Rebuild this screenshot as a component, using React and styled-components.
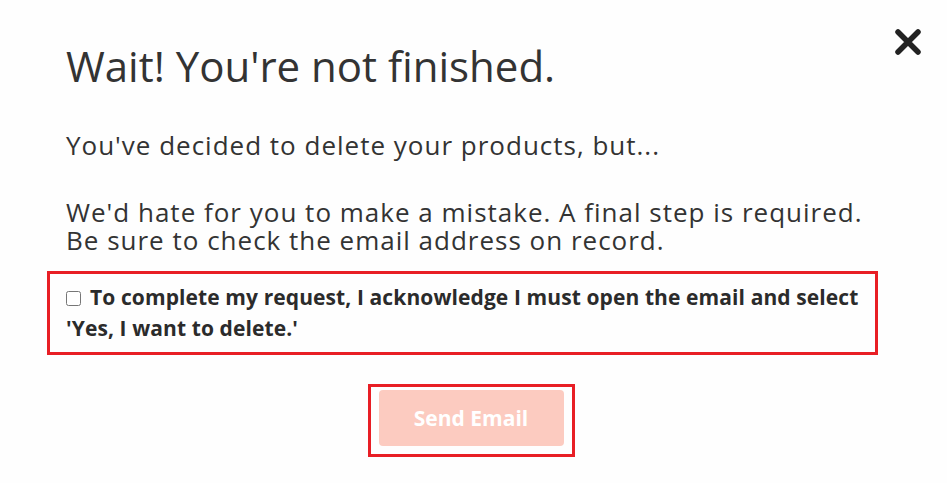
import React from "react";
import styled, { createGlobalStyle } from "styled-components";

const Global = createGlobalStyle`
  html, body { margin: 0; padding: 0; background: #fefefe; }
  body { font-family: "Open Sans", "Noto Sans", sans-serif; color: #333; }
`;

const Modal = styled.div`
  position: relative;
  width: 947px;
  height: 483px;
  box-sizing: border-box;
  padding: 42px 69px 0 47px;
  display: flex;
  flex-direction: column;
`;

const Close = styled.button`
  position: absolute;
  top: 27px;
  right: 24px;
  width: 30px;
  height: 30px;
  padding: 0;
  border: 0;
  background: none;
  display: flex;
  align-items: center;
  justify-content: center;
  cursor: pointer;
`;

const Title = styled.h1`
  margin: 0 0 0 19px;
  font-size: 42px;
  font-weight: 400;
  line-height: 48px;
  color: #333;
  white-space: nowrap;
`;

const Text = styled.p`
  margin: ${(p) => p.$mt}px 0 0 19px;
  font-size: 26px;
  letter-spacing: 1px;
  line-height: 28px;
  color: #333;
  white-space: nowrap;
`;

const Highlight = styled.div`
  margin-top: 17px;
  border: 3px solid #e81e25;
  padding: 8px 12px 8px 16px;
`;

const Label = styled.label`
  display: block;
  font-size: 21px;
  font-weight: 700;
  letter-spacing: 0.1px;
  line-height: 31px;
  color: #2b2b2b;
  white-space: nowrap;
`;

const Check = styled.input`
  width: 15px;
  height: 15px;
  margin: 0 9px 0 0;
  vertical-align: -1px;
  accent-color: #bbb;
`;

const ButtonRow = styled.div`
  display: flex;
  justify-content: center;
  margin-top: 29px;
  padding-left: 17px;
`;

const ButtonFrame = styled.div`
  border: 3px solid #e81e25;
  padding: 3px 8px 8px 8px;
`;

const SendButton = styled.button`
  width: 185px;
  height: 56px;
  border: 0;
  border-radius: 4px;
  background: #fccbc0;
  color: #fff;
  font-family: "Open Sans", "Noto Sans", sans-serif;
  font-size: 21px;
  font-weight: 700;
  cursor: not-allowed;
`;

export default function App() {
  return (
    <>
      <Global />
      <Modal>
        <Close aria-label="Close">
          <svg width="26" height="26" viewBox="0 0 26 26">
            <path d="M3 3 L23 23 M23 3 L3 23" stroke="#222" strokeWidth="5.5" strokeLinecap="round" />
          </svg>
        </Close>
        <Title>Wait! You're not finished.</Title>
        <Text $mt={41}>You've decided to delete your products, but...</Text>
        <Text $mt={39}>
          We'd hate for you to make a mistake. A final step is required.
          <br />
          Be sure to check the email address on record.
        </Text>
        <Highlight>
          <Label>
            <Check type="checkbox" />
            To complete my request, I acknowledge I must open the email and select
            <br />
            'Yes, I want to delete.'
          </Label>
        </Highlight>
        <ButtonRow>
          <ButtonFrame>
            <SendButton disabled>Send Email</SendButton>
          </ButtonFrame>
        </ButtonRow>
      </Modal>
    </>
  );
}
